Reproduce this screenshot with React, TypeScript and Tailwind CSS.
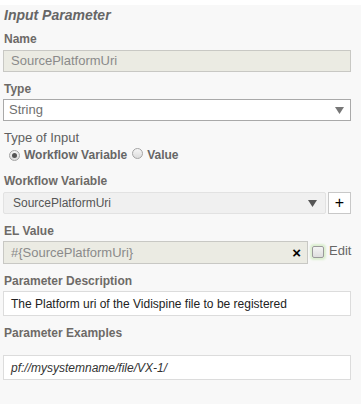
import { useState } from 'react';

const labelClass = 'pl-[1px] text-[12px] font-bold leading-[15px] text-[#6d6a67]';

function Radio({ checked }: { checked: boolean }) {
  return (
    <span className="relative inline-flex h-[11px] w-[11px] items-center justify-center rounded-full border border-[#a4a4a4] bg-gradient-to-b from-[#f6f6f6] to-[#dcdcdc]">
      {checked && <span className="h-[5px] w-[5px] rounded-full bg-[#555]" />}
    </span>
  );
}

function Arrow({ color }: { color: string }) {
  return (
    <svg width="9" height="7" viewBox="0 0 9 7" className="shrink-0">
      <path d="M0 0 L9 0 L4.5 7 Z" fill={color} />
    </svg>
  );
}

export default function App() {
  const [inputType] = useState<'variable' | 'value'>('variable');

  return (
    <div className="min-h-[404px] w-[361px] bg-[#f8f8f8] px-[3px] font-['Liberation_Sans',Arial,sans-serif]">
      <div className="mt-[5px] pl-[1px] text-[14px] font-bold italic leading-[20px] text-[#666]">
        Input Parameter
      </div>

      <div className={`mt-[7px] mb-[3px] ${labelClass}`}>Name</div>
      <div className="flex h-[22px] w-[348px] items-center border border-[#c8c8c4] bg-[#ebebe3] pl-[7px] text-[13px] text-[#8a8a8a]">
        SourcePlatformUri
      </div>

      <div className={`mt-[10px] mb-[2px] ${labelClass}`}>Type</div>
      <div className="flex h-[22px] w-[348px] items-center justify-between border border-[#a9a9a9] bg-white pl-[5px] pr-[6px] text-[13px] text-[#707070]">
        <span>String</span>
        <Arrow color="#777" />
      </div>

      <div className="mt-[9px] pl-[1px] text-[13px] leading-[16px] text-[#5f5f5f]">Type of Input</div>
      <div className="mt-[1px] flex h-[16px] items-center pl-[6px] text-[12px] font-bold text-[#666]">
        <Radio checked={inputType === 'variable'} />
        <span className="ml-[4px]">Workflow Variable</span>
        <span className="ml-[5px]">
          <Radio checked={inputType === 'value'} />
        </span>
        <span className="ml-[4px]">Value</span>
      </div>

      <div className={`mt-[11px] mb-[3px] ${labelClass}`}>Workflow Variable</div>
      <div className="flex h-[22px] w-[348px] gap-[2px]">
        <div className="flex h-[22px] flex-1 items-center justify-between rounded-[2px] border border-[#e2e2e2] bg-[#f0f0f0] pl-[9px] pr-[8px] text-[12px] text-[#555]">
          <span>SourcePlatformUri</span>
          <Arrow color="#555" />
        </div>
        <div className="flex h-[22px] w-[23px] items-center justify-center border border-[#c8c8c8] bg-white text-[16px] leading-none text-black">
          +
        </div>
      </div>

      <div className={`mt-[10px] mb-[2px] ${labelClass}`}>EL Value</div>
      <div className="flex h-[23px] items-center">
        <div className="flex h-[23px] w-[305px] items-center justify-between border border-[#c8c8c4] bg-[#ebebe3] pl-[7px] pr-[6px] text-[13px] text-[#8a8a8a]">
          <span>#{'{'}SourcePlatformUri{'}'}</span>
          <span className="text-[15px] font-bold leading-none text-black">×</span>
        </div>
        <span className="ml-[4px] mb-[2px] h-[12px] w-[12px] rounded-[2px] border border-[#9a9a9a] bg-gradient-to-b from-[#f4f4f4] to-[#dedede] shadow-[0_0_2px_2px_#dcefd0]" />
        <span className="ml-[5px] mb-[3px] text-[13px] text-[#666]">Edit</span>
      </div>

      <div className={`mt-[10px] mb-[2px] ${labelClass}`}>Parameter Description</div>
      <div className="flex h-[25px] w-[348px] items-center border border-[#dcdcdc] bg-white pl-[7px] text-[12px] text-[#222]">
        The Platform uri of the Vidispine file to be registered
      </div>

      <div className={`mt-[10px] mb-[14px] ${labelClass}`}>Parameter Examples</div>
      <div className="flex h-[25px] w-[348px] items-center border border-[#dcdcdc] bg-white pl-[7px] text-[12px] italic text-[#333]">
        pf://mysystemname/file/VX-1/
      </div>
    </div>
  );
}
